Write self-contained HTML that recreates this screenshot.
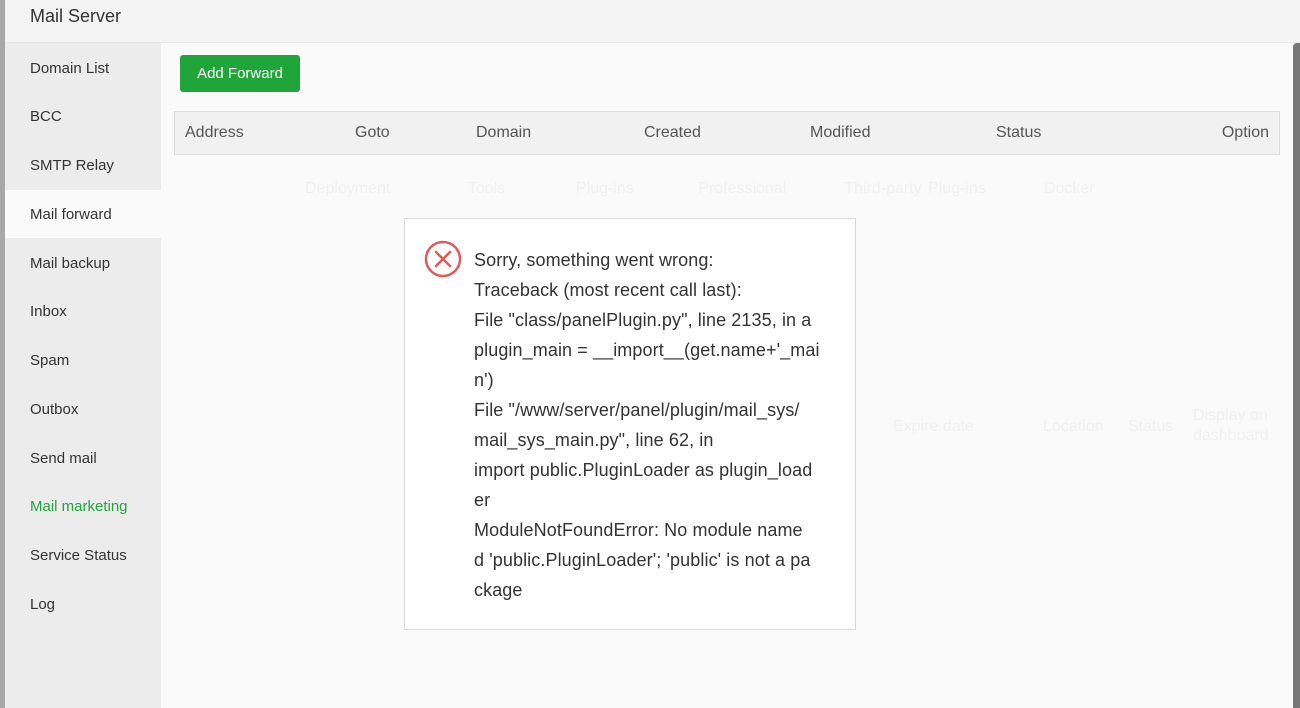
<!DOCTYPE html>
<html><head><meta charset="utf-8"><style>
*{margin:0;padding:0;box-sizing:border-box}
body{width:1300px;height:708px;overflow:hidden;background:#fafafa;font-family:"Liberation Sans",sans-serif;position:relative;color:#333}
.strip{position:absolute;left:0;top:0;width:5px;height:708px;background:#a8a8a8}
.title{position:absolute;left:5px;top:0;width:1295px;height:43px;background:#f3f3f3;border-bottom:1px solid #e8e8e8}
.title span{position:absolute;left:25px;top:6px;font-size:18px;color:#333}
.side{position:absolute;left:5px;top:43px;width:156px;height:665px;background:#ececed}
.side div{position:absolute;left:25px;font-size:15px;color:#333}
.side .act{left:0;width:156px;height:48px;background:#fafafa}
.content{position:absolute;left:161px;top:43px;width:1132px;height:665px;background:#fafafa}
.btn{position:absolute;left:180px;top:55px;width:120px;height:37px;background:#20a53a;border-radius:3px;color:#fff;font-size:15px;line-height:37px;text-align:center}
.th{position:absolute;left:174px;top:111px;width:1106px;height:44px;background:#f1f1f1;border:1px solid #ddd}
.th span{position:absolute;top:12px;font-size:16px;color:#555}
.scroll{position:absolute;left:1293px;top:43px;width:7px;height:665px;background:#777;border-radius:4px 0 0 0}
.ghost{position:absolute;color:#f0f0f0;font-size:16px}
.dlg{position:absolute;left:404px;top:218px;width:452px;height:412px;background:#fff;border:1px solid #d8d8d8}
.dlg .txt{position:absolute;left:69px;top:26px;width:370px;font-size:18px;line-height:30px;color:#333;word-break:break-all;letter-spacing:0.1px}
.dlg svg{position:absolute;left:19px;top:21px}
</style></head><body>
<div class="strip"></div>
<div class="content"></div>
<div class="ghost" style="left:305px;top:180px;word-spacing:2px">Deployment&nbsp;&nbsp;&nbsp;&nbsp;&nbsp;&nbsp;&nbsp;&nbsp;&nbsp;&nbsp;&nbsp;&nbsp;Tools&nbsp;&nbsp;&nbsp;&nbsp;&nbsp;&nbsp;&nbsp;&nbsp;&nbsp;&nbsp;&nbsp;Plug-ins&nbsp;&nbsp;&nbsp;&nbsp;&nbsp;&nbsp;&nbsp;&nbsp;&nbsp;&nbsp;Professional&nbsp;&nbsp;&nbsp;&nbsp;&nbsp;&nbsp;&nbsp;&nbsp;&nbsp;Third-party Plug-ins&nbsp;&nbsp;&nbsp;&nbsp;&nbsp;&nbsp;&nbsp;&nbsp;&nbsp;Docker</div>
<div class="ghost" style="left:893px;top:418px">Expire date</div>
<div class="ghost" style="left:1043px;top:418px">Location</div>
<div class="ghost" style="left:1128px;top:418px">Status</div>
<div class="ghost" style="left:1193px;top:406px;line-height:20px">Display on<br>dashboard</div>
<div class="title"><span>Mail Server</span></div>
<div class="side">
<div class="act" style="top:147px"></div>
<div style="top:17px">Domain List</div>
<div style="top:65px">BCC</div>
<div style="top:114px">SMTP Relay</div>
<div style="top:163px">Mail forward</div>
<div style="top:212px">Mail backup</div>
<div style="top:260px">Inbox</div>
<div style="top:309px">Spam</div>
<div style="top:358px">Outbox</div>
<div style="top:407px">Send mail</div>
<div style="top:455px;color:#20a53a">Mail marketing</div>
<div style="top:504px">Service Status</div>
<div style="top:553px">Log</div>
</div>
<div class="btn">Add Forward</div>
<div class="th">
<span style="left:10px">Address</span><span style="left:180px">Goto</span><span style="left:301px">Domain</span><span style="left:469px">Created</span><span style="left:635px">Modified</span><span style="left:821px">Status</span><span style="right:10px">Option</span>
</div>
<div class="scroll"></div>
<div class="dlg">
<svg width="38" height="38" viewBox="0 0 38 38"><circle cx="19" cy="19" r="17" fill="none" stroke="#e05a5a" stroke-width="2.5"/><path d="M12 12L26 26M26 12L12 26" stroke="#e05a5a" stroke-width="2.5" stroke-linecap="round"/></svg>
<div class="txt">Sorry, something went wrong:<br>Traceback (most recent call last):<br>File "class/panelPlugin.py", line 2135, in a<br>plugin_main = __import__(get.name+'_mai<br>n')<br>File "/www/server/panel/plugin/mail_sys/<br>mail_sys_main.py", line 62, in<br>import public.PluginLoader as plugin_load<br>er<br>ModuleNotFoundError: No module name<br>d 'public.PluginLoader'; 'public' is not a pa<br>ckage</div>
</div>
</body></html>
